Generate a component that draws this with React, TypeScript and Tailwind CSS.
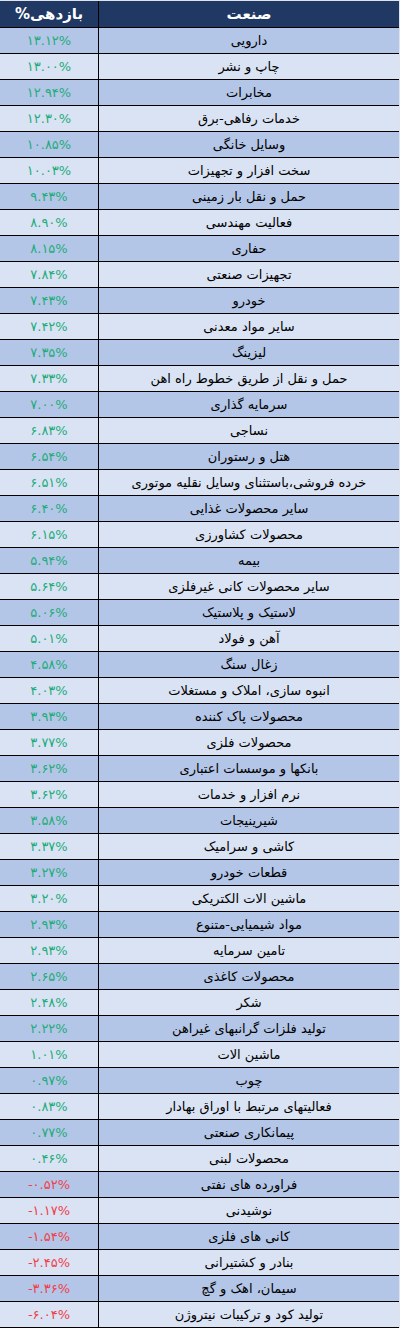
const rows: [string, number][] = [
  ['دارویی', 13.12],
  ['چاپ و نشر', 13.0],
  ['مخابرات', 12.94],
  ['خدمات رفاهی-برق', 12.3],
  ['وسایل خانگی', 10.85],
  ['سخت افزار و تجهیزات', 10.03],
  ['حمل و نقل بار زمینی', 9.43],
  ['فعالیت مهندسی', 8.9],
  ['حفاری', 8.15],
  ['تجهیزات صنعتی', 7.84],
  ['خودرو', 7.43],
  ['سایر مواد معدنی', 7.42],
  ['لیزینگ', 7.35],
  ['حمل و نقل از طریق خطوط راه اهن', 7.33],
  ['سرمایه گذاری', 7.0],
  ['نساجی', 6.83],
  ['هتل و رستوران', 6.54],
  ['خرده فروشی،باستثنای وسایل نقلیه موتوری', 6.51],
  ['سایر محصولات غذایی', 6.4],
  ['محصولات کشاورزی', 6.15],
  ['بیمه', 5.94],
  ['سایر محصولات کانی غیرفلزی', 5.64],
  ['لاستیک و پلاستیک', 5.06],
  ['آهن و فولاد', 5.01],
  ['زغال سنگ', 4.58],
  ['انبوه سازی، املاک و مستغلات', 4.03],
  ['محصولات پاک کننده', 3.93],
  ['محصولات فلزی', 3.77],
  ['بانکها و موسسات اعتباری', 3.62],
  ['نرم افزار و خدمات', 3.62],
  ['شیرینیجات', 3.58],
  ['کاشی و سرامیک', 3.37],
  ['قطعات خودرو', 3.27],
  ['ماشین الات الکتریکی', 3.2],
  ['مواد شیمیایی-متنوع', 2.93],
  ['تامین سرمایه', 2.93],
  ['محصولات کاغذی', 2.65],
  ['شکر', 2.48],
  ['تولید فلزات گرانبهای غیراهن', 2.22],
  ['ماشین الات', 1.01],
  ['چوب', 0.97],
  ['فعالیتهای مرتبط با اوراق بهادار', 0.83],
  ['پیمانکاری صنعتی', 0.77],
  ['محصولات لبنی', 0.46],
  ['فراورده های نفتی', -0.52],
  ['نوشیدنی', -1.17],
  ['کانی های فلزی', -1.54],
  ['بنادر و کشتیرانی', -2.45],
  ['سیمان، اهک و گچ', -3.36],
  ['تولید کود و ترکیبات نیتروژن', -6.04],
]

const faDigits = '۰۱۲۳۴۵۶۷۸۹'
const toFa = (s: string) => s.replace(/[0-9]/g, (d) => faDigits[Number(d)])

const font = { fontFamily: 'Tahoma, "DejaVu Sans", sans-serif' }

export default function App() {
  return (
    <div className="w-[400px] bg-[#dfe2ea] pt-px pr-px" style={font}>
      {/* Header */}
      <div className="flex h-[27px] bg-[#203864] border-b border-black text-white font-bold text-[15px]">
        <div className="w-[99px] border-r border-black flex items-center justify-center">
          <span dir="rtl">بازدهی%</span>
        </div>
        <div className="flex-1 flex items-center justify-center">
          <span dir="rtl">صنعت</span>
        </div>
      </div>

      {rows.map(([name, value], i) => (
        <div
          key={i}
          className={`flex h-[26px] border-b border-black text-[13px] ${
            i % 2 === 0 ? 'bg-[#b4c6e7]' : 'bg-[#dae3f3]'
          }`}
        >
          <div
            className={`w-[99px] border-r border-black flex items-center justify-center ${
              value < 0 ? 'text-[#f0404a]' : 'text-[#22ac7a]'
            }`}
          >
            <span dir="ltr">{toFa(value.toFixed(2))}%</span>
          </div>
          <div className="flex-1 flex items-center justify-center text-black">
            <span dir="rtl">{name}</span>
          </div>
        </div>
      ))}
    </div>
  )
}
